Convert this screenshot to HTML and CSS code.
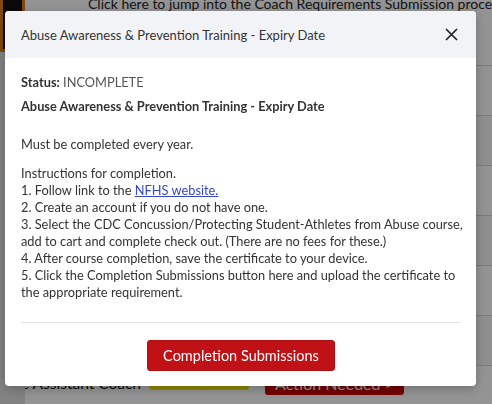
FILE: index.html
```html
<!DOCTYPE html>
<html lang="en">
<head>
  <meta charset="UTF-8">
  <title>Coach Requirements</title>
  <link rel="stylesheet" href="styles.css">
</head>
<body>
  <!-- page behind the dialog -->
  <div class="page">
    <div class="side">
      <div class="side-logo"></div>
    </div>
    <div class="main">
      <div class="intro">
        <p>Click here to jump into the Coach Requirements Submission process for submitting</p>
        <p>Coaching Requirements:</p>
      </div>
      <div class="row row-light"></div>
      <div class="row"></div>
      <div class="row row-light"><span class="peek">Basic</span></div>
      <div class="row"><span class="peek">Coaching</span></div>
      <div class="row row-light"></div>
      <div class="row"><span class="peek">League</span></div>
      <div class="row-coach">
        <span class="coach-name">Spring League Assistant Coach</span>
        <span class="badge">PENDING REQUIREMENTS</span>
        <span class="action">Action Needed &gt;</span>
      </div>
    </div>
  </div>
  <div class="backdrop"></div>

  <!-- dialog -->
  <div class="modal">
    <div class="modal-header">
      <span class="modal-title">Abuse Awareness &amp; Prevention Training - Expiry Date</span>
      <button class="close" aria-label="Close">
        <svg width="13" height="13" viewBox="0 0 13 13"><path d="M1 1L12 12M12 1L1 12" stroke="#222" stroke-width="1.7" fill="none"/></svg>
      </button>
    </div>
    <div class="modal-body">
      <p class="status"><b>Status:</b> <span>INCOMPLETE</span></p>
      <p class="req-title">Abuse Awareness &amp; Prevention Training - Expiry Date</p>
      <p class="desc">Must be completed every year.</p>
      <p class="steps">Instructions for completion.<br>
1. Follow link to the <a href="#">NFHS website.</a><br>
2. Create an account if you do not have one.<br>
3. Select the CDC Concussion/Protecting Student-Athletes from Abuse course, add to cart and complete check out. (There are no fees for these.)<br>
4. After course completion, save the certificate to your device.<br>
5. Click the Completion Submissions button here and upload the certificate to the appropriate requirement.</p>
      <hr>
      <div class="actions">
        <button class="submit">Completion Submissions</button>
      </div>
    </div>
  </div>
</body>
</html>
```

FILE: styles.css
```css
body {
  margin: 0;
  font-family: "Lato", "Noto Sans", sans-serif;
  color: #333;
  overflow: hidden;
}

/* page behind */
.page {
  display: flex;
  height: 404px;
  background: #eee;
}
.side {
  width: 25px;
  flex-shrink: 0;
  background: #e1e1e1;
}
.side-logo {
  height: 52px;
  background: #111;
  border: 3px solid #e07b16;
  border-top: none;
  box-sizing: border-box;
}
.main {
  flex: 1;
  min-width: 0;
  display: flex;
  flex-direction: column;
  overflow: hidden;
}
.intro {
  padding: 0 0 0 63px;
  height: 65px;
  background: #fff;
  white-space: nowrap;
}
.intro p {
  margin: 0;
  font-size: 14px;
  line-height: 14px;
  color: #222;
}
.intro p:first-child {
  margin-top: -3px;
}
.row {
  height: 49px;
  flex-shrink: 0;
  background: #f7f7f7;
  border-top: 1px solid #d5d5d5;
  margin-left: -25px;
  white-space: nowrap;
}
.row-light {
  background: #fff;
}
.peek {
  display: block;
  font-size: 15px;
  line-height: 49px;
  margin-left: -14px;
  color: #222;
}
.row-coach {
  flex: 1;
  display: flex;
  align-items: flex-start;
  white-space: nowrap;
  padding: 7px 0 0 0;
  margin-left: -91px;
  background: #fff;
  border-top: 1px solid #d5d5d5;
}
.coach-name {
  font-size: 15.5px;
  color: #111;
  line-height: 20px;
  margin-right: 8px;
}
.badge {
  width: 100px;
  box-sizing: border-box;
  text-align: center;
  background: #f0e800;
  color: #fff;
  font-size: 7px;
  line-height: 14px;
  border-radius: 4px;
  margin-top: 3px;
  margin-right: 16px;
}
.action {
  width: 139px;
  box-sizing: border-box;
  text-align: center;
  background: #c80000;
  color: #fff;
  font-size: 16px;
  line-height: 22px;
  border-radius: 3px;
}
.backdrop {
  position: fixed;
  inset: 0;
  background: rgba(0, 0, 0, 0.42);
}

/* dialog */
.modal {
  position: fixed;
  left: 5px;
  top: 11px;
  width: 471px;
  height: 375px;
  background: #fff;
  border-radius: 4px;
  box-shadow: 0 3px 12px rgba(0, 0, 0, 0.25);
  overflow: hidden;
}
.modal-header {
  height: 47px;
  background: #f2f3f7;
  display: flex;
  align-items: center;
  justify-content: space-between;
  padding: 0 18px 0 16px;
}
.modal-title {
  font-size: 13px;
  color: #333;
}
.close {
  border: none;
  background: none;
  padding: 0;
  width: 13px;
  height: 13px;
  cursor: pointer;
}
.close svg {
  display: block;
}
.modal-body {
  padding: 16px 8px 0 16px;
  font-size: 12.8px;
  line-height: 17px;
}
.modal-body p {
  margin: 0;
}
.status span {
  color: #555;
}
.req-title {
  font-weight: bold;
  margin-top: 7px !important;
}
.desc {
  margin-top: 21px !important;
}
.steps {
  margin-top: 12px !important;
}
.steps a {
  color: #3549c4;
}
hr {
  border: none;
  border-top: 1px solid #e3e3e3;
  margin: 21px 7px 0 0;
}
.actions {
  display: flex;
  justify-content: center;
  padding: 17px 7px 0 0;
}
.submit {
  background: #c01116;
  color: #fff;
  border: 1px solid #b00e12;
  border-radius: 3px;
  font-family: inherit;
  font-size: 14.5px;
  height: 31px;
  width: 188px;
  padding: 0;
  cursor: pointer;
}
```
